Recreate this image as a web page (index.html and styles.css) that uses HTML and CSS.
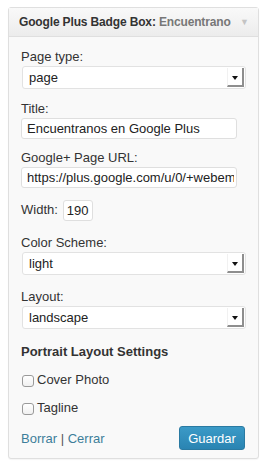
FILE: index.html
```html
<!DOCTYPE html>
<html lang="es">
<head>
    <meta charset="UTF-8">
    <meta name="viewport" content="width=device-width, initial-scale=1.0">
    <title>Google Plus Badge Box</title>
    <link rel="stylesheet" href="styles.css">
</head>
<body>
    <div class="widget">
        <div class="widget-top">
            <h3><strong>Google Plus Badge Box</strong>: <span class="in-title">Encuentrano</span></h3>
            <span class="toggle">&#9660;</span>
        </div>

        <div class="widget-inside">
            <div class="field">
                <label>Page type:</label>
                <div class="select"><span>page</span><span class="select-arrow"></span></div>
            </div>

            <div class="field text">
                <label for="title">Title:</label>
                <input type="text" id="title" value="Encuentranos en Google Plus">
            </div>

            <div class="field text">
                <label for="url">Google+ Page URL:</label>
                <input type="text" id="url" value="https://plus.google.com/u/0/+webempresa">
            </div>

            <div class="field inline">
                <label for="width">Width:</label>
                <input type="text" id="width" class="small" value="190">
            </div>

            <div class="field scheme">
                <label>Color Scheme:</label>
                <div class="select"><span>light</span><span class="select-arrow"></span></div>
            </div>

            <div class="field last">
                <label>Layout:</label>
                <div class="select"><span>landscape</span><span class="select-arrow"></span></div>
            </div>

            <h4>Portrait Layout Settings</h4>
            <div class="check"><span class="box"></span>Cover Photo</div>
            <div class="check"><span class="box"></span>Tagline</div>

            <div class="actions">
                <div class="links"><a href="#">Borrar</a> | <a href="#">Cerrar</a></div>
                <button>Guardar</button>
            </div>
        </div>
    </div>
</body>
</html>
```

FILE: styles.css
```css
* {
    margin: 0;
    padding: 0;
    box-sizing: border-box;
}

body {
    font-family: 'Liberation Sans', Arial, sans-serif;
    font-size: 13px;
    color: #333;
    background: #fff;
    padding: 7px 10px 6px 8px;
}

.widget {
    border: 1px solid #dfdfdf;
    border-radius: 3px;
    background: #f9f9f9;
    box-shadow: 0 1px 1px rgba(0, 0, 0, 0.04);
}

.widget-top {
    display: flex;
    justify-content: space-between;
    align-items: center;
    height: 29px;
    padding: 0 9px 0 10px;
    background: linear-gradient(#f9f9f9, #ececec);
    border-bottom: 1px solid #dfdfdf;
}

.widget-top h3 {
    font-size: 12px;
    font-weight: bold;
    letter-spacing: -0.15px;
    color: #333;
    white-space: nowrap;
    overflow: hidden;
}

.in-title {
    color: #777;
}

.toggle {
    font-size: 9px;
    color: #c4c4c4;
}

.widget-inside {
    padding: 12px 12px 8px 12px;
}

.field {
    margin-bottom: 12px;
}

.field.text {
    margin-bottom: 11px;
}

.field.scheme {
    margin-bottom: 14px;
}

.field.last {
    margin-bottom: 15px;
}

.field label {
    display: block;
    line-height: 16px;
    margin-bottom: 1px;
}

.select {
    display: flex;
    align-items: center;
    justify-content: space-between;
    height: 23px;
    margin-left: 1px;
    background: #fff;
    border: 1px solid #e2e2e2;
    border-radius: 3px;
    padding: 0 1px 0 6px;
    color: #222;
}

.select-arrow {
    width: 17px;
    height: 19px;
    border-right: 2px solid #8e8e8e;
    border-bottom: 2px solid #8e8e8e;
    border-left: 1px solid #f1f1f1;
    display: flex;
    align-items: center;
    justify-content: center;
}

.select-arrow::after {
    content: "";
    border-left: 3px solid transparent;
    border-right: 3px solid transparent;
    border-top: 4px solid #111;
    margin-top: 3px;
}

input {
    display: block;
    width: 216px;
    height: 21px;
    font-family: inherit;
    font-size: 13px;
    color: #222;
    background: #fff;
    border: 1px solid #dfdfdf;
    border-radius: 3px;
    padding: 0 2px 0 5px;
    outline: none;
}

.field.inline {
    display: flex;
    align-items: center;
    gap: 5px;
    height: 22px;
    margin-bottom: 14px;
}

.field.inline label {
    margin-bottom: 0;
}

input.small {
    width: 30px;
    padding: 0 3px;
}

h4 {
    font-size: 13px;
    font-weight: bold;
    line-height: 16px;
    margin-bottom: 10px;
}

.check {
    display: flex;
    align-items: center;
    gap: 3px;
    height: 18px;
    margin-bottom: 10px;
}

.check .box {
    width: 12px;
    height: 12px;
    margin-top: 4px;
    margin-left: 1px;
    border: 1px solid #9a9a9a;
    border-radius: 3px;
    background: linear-gradient(#fff, #f0f0f0);
}

.actions {
    display: flex;
    justify-content: space-between;
    align-items: center;
    margin-top: 4px;
}

.links {
    color: #555;
}

.links a {
    color: #3d7e9a;
    text-decoration: none;
}

button {
    font-family: inherit;
    font-size: 13px;
    color: #fff;
    width: 66px;
    height: 24px;
    border: 1px solid #2a7aa2;
    border-radius: 3px;
    background: linear-gradient(#3b9ac7, #2a84b2);
    margin-right: 1px;
}
```
